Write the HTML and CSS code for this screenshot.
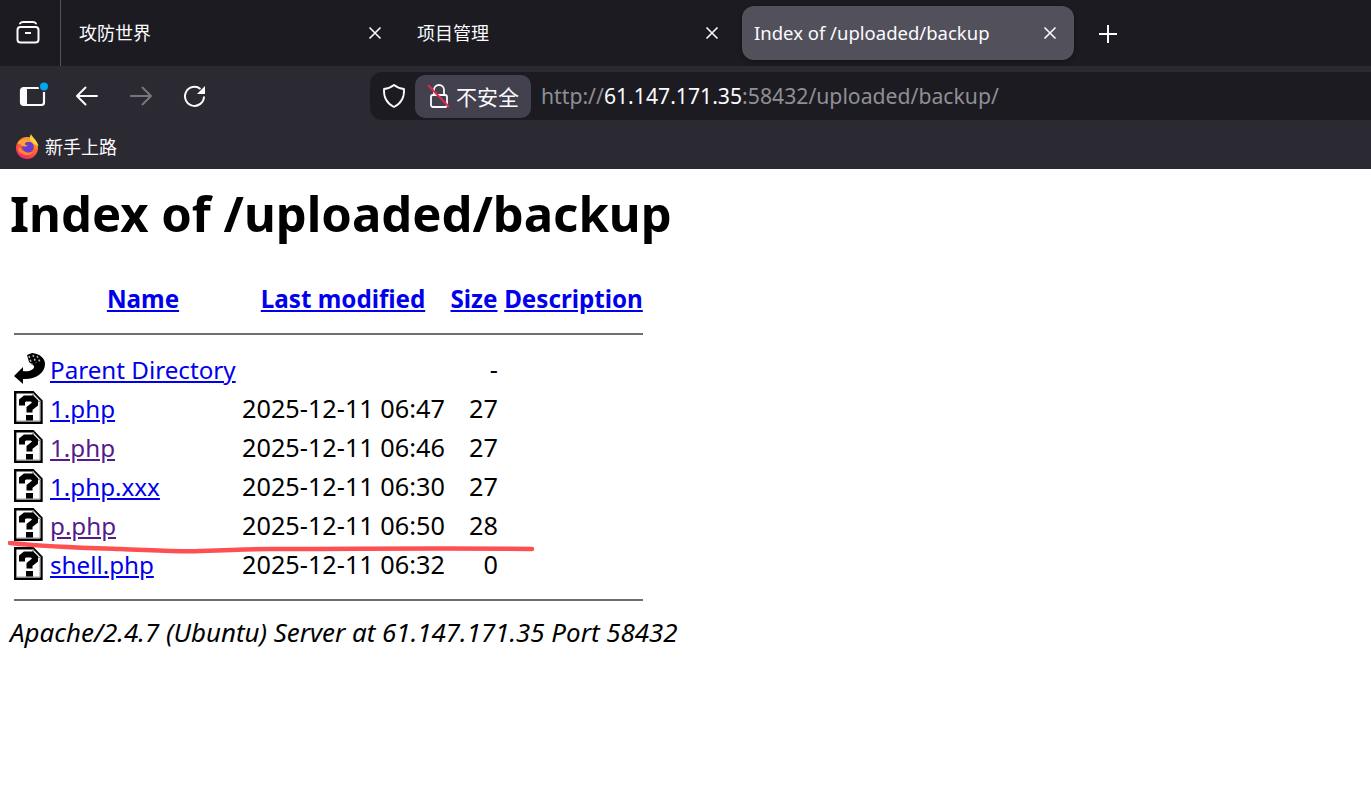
FILE: index.html
```html
<!DOCTYPE html>
<html lang="zh-CN">
<head>
<meta charset="utf-8">
<title>Index of /uploaded/backup</title>
<link rel="stylesheet" href="styles.css">
</head>
<body>
<svg class="defs" width="0" height="0">
  <defs>
    <symbol id="unknown" viewBox="0 0 30 33">
      <path d="M1.200 1.200H19L27.500 10V31.800H1.200Z" fill="#fff" stroke="#000" stroke-width="2.400"/>
      <path d="M19 2V10.500H27" fill="#e4e4e4" stroke="#8a8a8a" stroke-width="1.500"/>
      <path d="M3 30H26V12" fill="none" stroke="#999" stroke-width="1"/>
      <path d="M8 14.500V10L11 7.500H18L21 10.500V13L15.500 17.500V21.500" fill="none" stroke="#000" stroke-width="6"/>
      <rect x="12" y="24" width="7" height="5.500" fill="#000"/>
    </symbol>
    <symbol id="xmark" viewBox="0 0 14 14">
      <path d="M1.500 1.500l11 11M12.500 1.500l-11 11" stroke="#fbfbfe" stroke-width="1.600" fill="none"/>
    </symbol>
    <linearGradient id="fxa" x1=".85" y1="0" x2=".3" y2="1">
      <stop offset="0" stop-color="#ffbd2e"/><stop offset=".45" stop-color="#ff6a2b"/><stop offset="1" stop-color="#f0247a"/>
    </linearGradient>
  </defs>
</svg>

<header class="chrome">
  <div class="tabbar">
    <div class="tabs-btn">
      <svg width="26" height="26" viewBox="0 0 26 26" fill="none" stroke="#fbfbfe" stroke-width="2"><path d="M5 3.500c1-1.300 2-1.500 3-1.500h10c1 0 2 .2 3 1.500" stroke-linecap="round"/><rect x="2.500" y="7" width="21" height="15.500" rx="3"/><path d="M10 13h6"/></svg>
    </div>
    <div class="tab tab-first"><span class="tab-title">攻防世界</span><svg class="tab-x" width="14" height="14"><use href="#xmark"/></svg></div>
    <div class="tab tab-second"><span class="tab-title">项目管理</span><svg class="tab-x" width="14" height="14"><use href="#xmark"/></svg></div>
    <div class="tab tab-active"><span class="tab-title">Index of /uploaded/backup</span><svg class="tab-x" width="14" height="14"><use href="#xmark"/></svg></div>
    <svg class="new-tab" width="20" height="20" viewBox="0 0 20 20" stroke="#fbfbfe" stroke-width="2"><path d="M10 1v18M1 10h18"/></svg>
  </div>

  <div class="toolbar">
    <div class="sidebar-btn">
      <svg width="30" height="30" viewBox="0 0 30 30"><rect x="2" y="7" width="23" height="17" rx="2.500" fill="none" stroke="#fbfbfe" stroke-width="2.200"/><rect x="2" y="7" width="6" height="17" fill="#fbfbfe"/><circle cx="25" cy="5.500" r="5.500" fill="#2b2a33"/><circle cx="25" cy="5.500" r="4" fill="#00a6f0"/></svg>
    </div>
    <svg class="nav nav-back" width="24" height="24" viewBox="0 0 24 24" fill="none" stroke="#fbfbfe" stroke-width="2" stroke-linecap="round" stroke-linejoin="round"><path d="M22 12H2M10.500 3.500L2 12l8.500 8.500"/></svg>
    <svg class="nav nav-forward" width="24" height="24" viewBox="0 0 24 24" fill="none" stroke="#77767c" stroke-width="2" stroke-linecap="round" stroke-linejoin="round"><path d="M2 12h20M13.500 3.500L22 12l-8.500 8.500"/></svg>
    <svg class="nav nav-reload" width="24" height="24" viewBox="0 0 24 24" fill="none"><path d="M21 12.500A9.500 9.500 0 1 1 17.500 5" stroke="#fbfbfe" stroke-width="2"/><path d="M22 2v8h-8Z" fill="#fbfbfe"/></svg>

    <div class="urlbar">
      <svg class="shield" width="24" height="26" viewBox="0 0 24 26" fill="none" stroke="#fbfbfe" stroke-width="1.800"><path d="M12 2c3 2.500 6 3.500 10 4 .5 8-2 14-10 18C4 20 1.500 14 2 6c4-.5 7-1.500 10-4Z" stroke-linejoin="round"/></svg>
      <div class="security">
        <svg width="22" height="26" viewBox="0 0 22 26" fill="none"><path d="M6 12V7a5 5 0 0 1 10 0v5" stroke="#fbfbfe" stroke-width="1.800"/><rect x="3" y="12" width="16" height="12" rx="2" stroke="#fbfbfe" stroke-width="1.800"/><path d="M0 2l21 22" stroke="#e22850" stroke-width="2"/></svg>
        <span class="security-label">不安全</span>
      </div>
      <div class="url"><span class="url-dim">http://</span><span class="url-host">61.147.171.35</span><span class="url-dim">:58432/uploaded/backup/</span></div>
    </div>
  </div>

  <div class="bookmarks">
    <svg width="24" height="25" viewBox="0 0 24 25">
      <circle cx="12" cy="14" r="11" fill="url(#fxa)"/>
      <path d="M16 0c1 3 6 6 7.500 12-3-1-6-3-8-5-1-2-1-4 .5-7Z" fill="#ffd23a"/>
      <circle cx="13" cy="13" r="5.800" fill="#6a3bd1"/>
      <path d="M2 10c2-4 5-5 8-4.500 3 .5 5 1.500 6 3-2.500-.8-5-.6-6 .8-.6 1 .4 2 3 2.500-1.500 1-5 1-6.500-.5C5 10 3.500 9 2 10Z" fill="#ffa436"/>
      <path d="M3 15c1 4 5 6 9 6 3 0 5-1 6-3-3 1-6 1-8.500-.5C7 16 5.500 15 5 13Z" fill="#ff8a2b"/>
    </svg>
    <span class="bookmark-label">新手上路</span>
  </div>
</header>

<main class="page">
  <h1 class="title">Index of /uploaded/backup</h1>
  <table class="listing">
    <colgroup><col class="c-icon"><col class="c-name"><col class="c-date"><col class="c-size"><col class="c-desc"></colgroup>
    <tr class="head"><th></th><th><a href="#a">Name</a></th><th><a href="#b">Last modified</a></th><th><a href="#c">Size</a></th><th><a href="#d">Description</a></th></tr>
    <tr class="rule-row"><td colspan="5"><hr class="rule"></td></tr>
    <tr>
      <td><svg class="file-icon" width="32" height="33" viewBox="0 0 32 33"><path d="M0 24 9 15V19C14 20 21 18 20 14L15 10 13 3 18 1C26 2 31 6 31 12 31 22 20 28 9 27V32Z" fill="#000"/><path d="M15 4l3 9M19 3l3 8M23 4l3 6" stroke="#bdbdbd" stroke-width="1.500" stroke-dasharray="2 2" fill="none"/></svg></td>
      <td><a href="#p">Parent Directory</a></td><td></td><td class="num">-</td><td></td>
    </tr>
    <tr><td><svg class="file-icon" width="30" height="33"><use href="#unknown"/></svg></td><td><a href="#1">1.php</a></td><td>2025-12-11 06:47</td><td class="num">27</td><td></td></tr>
    <tr><td><svg class="file-icon" width="30" height="33"><use href="#unknown"/></svg></td><td><a class="seen" href="#2">1.php</a></td><td>2025-12-11 06:46</td><td class="num">27</td><td></td></tr>
    <tr><td><svg class="file-icon" width="30" height="33"><use href="#unknown"/></svg></td><td><a href="#3">1.php.xxx</a></td><td>2025-12-11 06:30</td><td class="num">27</td><td></td></tr>
    <tr><td><svg class="file-icon" width="30" height="33"><use href="#unknown"/></svg></td><td><a class="seen" href="#4">p.php</a></td><td>2025-12-11 06:50</td><td class="num">28</td><td></td></tr>
    <tr><td><svg class="file-icon" width="30" height="33"><use href="#unknown"/></svg></td><td><a href="#5">shell.php</a></td><td>2025-12-11 06:32</td><td class="num">0</td><td></td></tr>
    <tr class="rule-row rule-end"><td colspan="5"><hr class="rule"></td></tr>
  </table>
  <address class="server">Apache/2.4.7 (Ubuntu) Server at 61.147.171.35 Port 58432</address>
  <svg class="scribble" width="530" height="16" viewBox="0 0 530 16" fill="none"><path d="M2 2C40 6 80 7 112 8c30 1 60 3 80 2 24-1 50-2 70-2 90 0 170-1 262 0" stroke="#fe5050" stroke-width="4.500" stroke-linecap="round"/></svg>
</main>
</body>
</html>
```
FILE: styles.css
```css
html, body { margin: 0; padding: 0; background: #fff; }
body { width: 1371px; height: 801px; overflow: hidden; font-family: "Noto Sans", "Noto Sans CJK SC", sans-serif; color: #000; }
.defs { position: absolute; }

.chrome { color: #fbfbfe; }
.tabbar { height: 66px; background: #1c1b22; display: flex; align-items: flex-start; }
.tabs-btn { width: 60px; height: 66px; border-right: 1px solid #55545a; display: flex; align-items: center; justify-content: center; }
.tabs-btn svg { margin-right: 5px; }
.tab { height: 54px; margin-top: 6px; display: flex; align-items: center; justify-content: space-between; box-sizing: border-box; font-size: 18px; flex: none; }
.tab-title { padding-bottom: 2px; }
.tab-first { width: 325px; padding: 0 4px 0 18px; }
.tab-second { width: 356px; padding: 0 23px 0 31px; }
.tab-active { width: 332px; padding: 0 17px 0 12px; background: #52515b; border-radius: 12px; box-shadow: 0 1px 4px rgba(0,0,0,.4); font-size: 18.500px; }
.tab-x { flex: none; }
.new-tab { margin: 24px 0 0 24px; flex: none; }

.toolbar { height: 64px; box-sizing: border-box; padding-bottom: 4px; background: #2b2a33; display: flex; align-items: center; }
.sidebar-btn { width: 30px; height: 30px; margin-left: 19px; }
.nav { flex: none; }
.nav-back { margin-left: 26px; }
.nav-forward { margin-left: 30px; }
.nav-reload { margin-left: 30px; }
.urlbar { width: 1001px; height: 48px; margin-left: 163px; background: #1c1b22; border-radius: 12px 0 0 12px; display: flex; align-items: center; box-sizing: border-box; padding-left: 12px; }
.shield { flex: none; }
.security { height: 43px; margin-left: 9px; padding: 0 0 0 13px; width: 116px; box-sizing: border-box; background: #42414d; border-radius: 10px; display: flex; align-items: center; gap: 6px; font-size: 21px; flex: none; }
.security-label { white-space: nowrap; }
.url { margin-left: 10px; padding-bottom: 2px; font-size: 21.200px; white-space: nowrap; }
.url-dim { color: #8f8f95; }
.url-host { color: #fbfbfe; }

.bookmarks { height: 39px; background: #2b2a33; box-sizing: border-box; padding: 0 0 7px 15px; display: flex; align-items: center; gap: 6px; font-size: 18px; }

.page { position: relative; padding: 0 10px; height: 632px; }
.title { margin: 0; padding-top: 12px; font-size: 49px; line-height: 64px; font-weight: 700; white-space: nowrap; }
.listing { margin: 33px 0 0 -2px; border-collapse: separate; border-spacing: 6px 0; table-layout: fixed; width: 641px; font-size: 25.250px; }
.c-icon { width: 30px; }
.c-name { width: 186px; }
.c-date { width: 202px; }
.c-size { width: 48px; }
.c-desc { width: 139px; }
.listing td, .listing th { padding: 0; height: 39px; white-space: nowrap; vertical-align: middle; }
.listing .head th { height: 40px; font-weight: 700; text-align: center; font-size: 24.200px; }
.listing .rule-row td { height: 31px; }
.listing .rule-end td { height: 33px; }
.rule { border: 0; border-top: 2px solid #6e6e6e; margin: 0; }
.num { text-align: right; }
.file-icon { display: block; }
a { color: #00e; }
a.seen { color: #551a8b; }
.listing td a { font-size: 24.200px; }
.server { margin-top: 0; font-size: 25.900px; line-height: 32px; font-style: italic; white-space: nowrap; }
.scribble { position: absolute; left: 8px; top: 372px; }
```
